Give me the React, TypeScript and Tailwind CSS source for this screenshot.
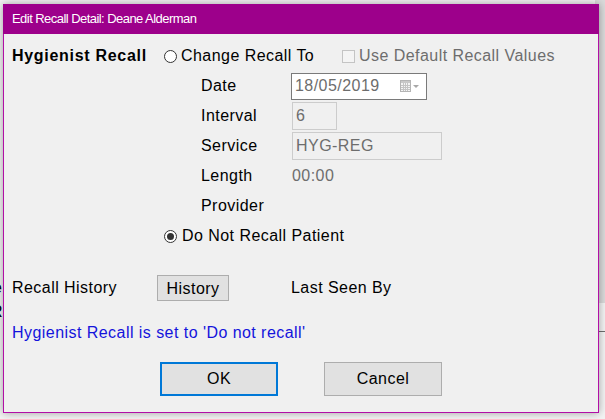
import React from 'react'

const font = "font-['Liberation_Sans',Arial,sans-serif]"

const Radio: React.FC<{ checked?: boolean }> = ({ checked }) => (
  <span className="w-[13px] h-[13px] rounded-full border border-[#333333] bg-white flex items-center justify-center shrink-0">
    {checked && <span className="w-[7px] h-[7px] rounded-full bg-[#333333]" />}
  </span>
)

const CalendarIcon: React.FC = () => (
  <svg width="20" height="12" viewBox="0 0 20 12">
    <rect x="0.5" y="0.5" width="10" height="11" fill="#f4f4f4" stroke="#b4b4b4" />
    <rect x="1" y="1" width="9" height="2" fill="#c8c8c8" />
    <path d="M1 5.5H10M1 7.5H10M1 9.5H10M3.5 3V11M5.5 3V11M7.5 3V11" stroke="#c4c4c4" strokeWidth="1" />
    <path d="M13 5H19L16 8Z" fill="#a8a8a8" />
  </svg>
)

const FormRow: React.FC<{ label: string; children?: React.ReactNode }> = ({ label, children }) => (
  <div className="h-[30px] flex items-center ml-[197px]">
    <span className="w-[90px]">{label}</span>
    {children}
  </div>
)

export default function App() {
  return (
    <div className={`relative w-[605px] h-[419px] overflow-hidden bg-[#f3f3f3] text-[16px] tracking-[0.45px] text-black ${font}`}>
      {/* what shows behind the dialog */}
      <div className="absolute right-0 top-0 w-[10px] h-[303px] bg-[#dadada]" />
      <div className="absolute right-0 top-[331px] w-[12px] h-px bg-[#6e6e6e]" />
      <span className="absolute left-[-7px] top-[279px] leading-[18px]">e</span>
      <span className="absolute left-[-9px] top-[303px] leading-[18px]">R</span>

      <div className="absolute left-[3px] top-[4px] w-[596px] h-[409px] flex flex-col shadow-[0_0_8px_rgba(0,0,0,0.35)]">
        <div className="h-[30px] shrink-0 bg-[#9d008b] flex items-center pl-[9px] text-white text-[13px] tracking-[-0.55px]">
          Edit Recall Detail: Deane Alderman
        </div>

        <div className="flex-1 bg-[#f0f0f0] border-x border-b border-[#b20fa6] flex flex-col pt-[7px]">
          <div className="h-[30px] flex items-center pl-[8px]">
            <span className="w-[152px] font-bold tracking-[0.7px]">Hygienist Recall</span>
            <span className="w-[178px] flex items-center gap-[4px]">
              <Radio />
              <span>Change Recall To</span>
            </span>
            <span className="flex items-center gap-[4px] text-[#6d6d6d]">
              <span className="w-[13px] h-[13px] border border-[#c4c4c4] bg-[#f4f4f4]" />
              <span>Use Default Recall Values</span>
            </span>
          </div>

          <FormRow label="Date">
            <div className="w-[136px] h-[27px] border border-[#7a7a7a] bg-white flex items-center justify-between pl-[3px] pr-[6px] text-[#6d6d6d]">
              <span>18/05/2019</span>
              <CalendarIcon />
            </div>
          </FormRow>
          <FormRow label="Interval">
            <div className="ml-[1px] w-[45px] h-[28px] border border-[#cccccc] flex items-center pl-[3px] text-[#6d6d6d]">6</div>
          </FormRow>
          <FormRow label="Service">
            <div className="ml-[1px] w-[150px] h-[28px] border border-[#cccccc] flex items-center pl-[3px] text-[#6d6d6d]">HYG-REG</div>
          </FormRow>
          <FormRow label="Length">
            <span className="ml-[1px] text-[#6d6d6d]">00:00</span>
          </FormRow>
          <FormRow label="Provider" />

          <div className="h-[30px] flex items-center ml-[160px] gap-[5px]">
            <Radio checked />
            <span>Do Not Recall Patient</span>
          </div>

          <div className="mt-[22px] h-[30px] flex items-center pl-[8px]">
            <span className="w-[145px]">Recall History</span>
            <button className="w-[72px] h-[26px] border border-[#adadad] bg-[#e1e1e1] flex items-center justify-center pt-[1px]">
              History
            </button>
            <span className="ml-[62px]">Last Seen By</span>
          </div>

          <div className="mt-[15px] h-[30px] flex items-center pl-[8px] text-[#1414dc]">
            Hygienist Recall is set to 'Do not recall'
          </div>

          <div className="mt-[14px] flex items-center ml-[156px]">
            <button className="w-[118px] h-[34px] border-2 border-[#0078d7] bg-[#e1e1e1] flex items-center justify-center">
              OK
            </button>
            <button className="ml-[46px] w-[118px] h-[34px] border border-[#adadad] bg-[#e1e1e1] flex items-center justify-center">
              Cancel
            </button>
          </div>
        </div>
      </div>
    </div>
  )
}
